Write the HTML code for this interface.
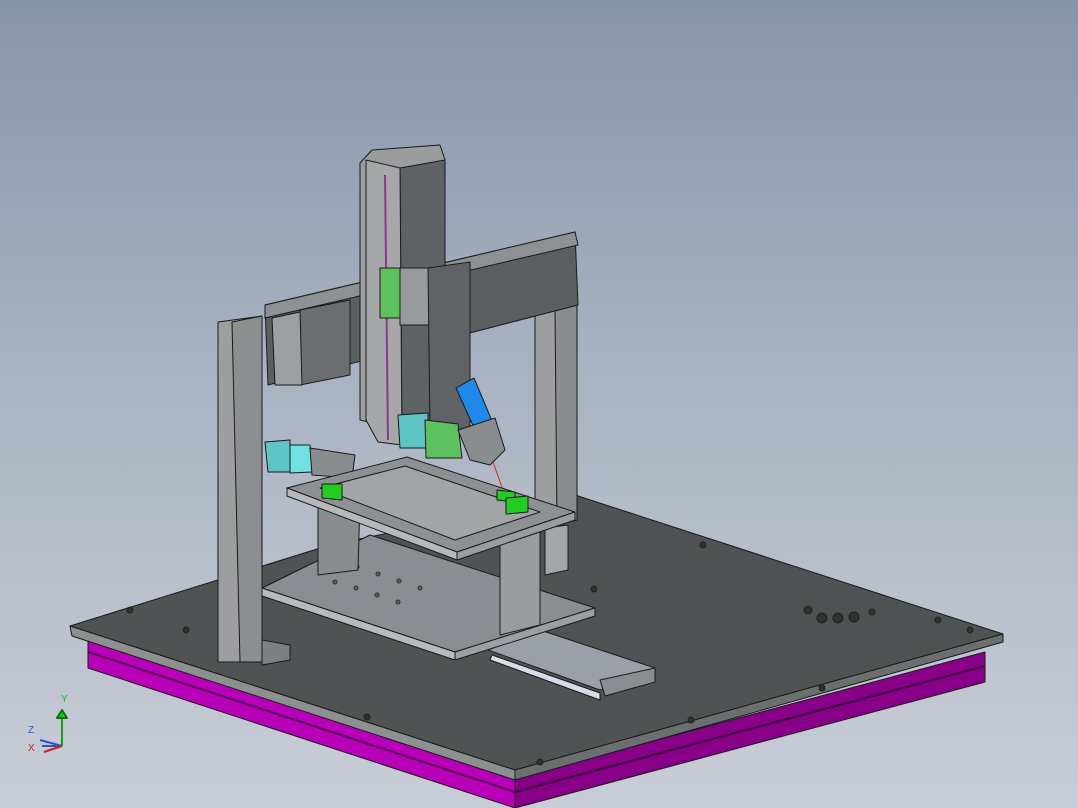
<!DOCTYPE html>
<html><head><meta charset="utf-8"><style>
html,body{margin:0;padding:0;width:1078px;height:808px;overflow:hidden}
body{background:linear-gradient(180deg,#8795aa 0%,#a9b2c2 45%,#c9cdd6 100%);font-family:"Liberation Sans",sans-serif}
svg{position:absolute;left:0;top:0}
</style></head><body>
<svg width="1078" height="808" viewBox="0 0 1078 808" stroke="#1a1a1a" stroke-width="1" stroke-linejoin="round">
<!-- magenta frame -->
<polygon points="88,640 515,778 515,808 88,668" fill="#b800b8"/>
<polygon points="515,778 985,652 985,682 515,808" fill="#880088"/>
<line x1="88" y1="652" x2="515" y2="792" stroke="#5a005a" stroke-width="2"/>
<line x1="515" y1="792" x2="985" y2="666" stroke="#400040" stroke-width="2"/>
<!-- plate -->
<polygon points="70,626 330,545 575,495 1003,634 515,770" fill="#4f5354"/>
<polygon points="70,626 515,770 515,780 72,636" fill="#8d9091"/>
<polygon points="515,770 1003,634 1003,642 515,780" fill="#6c6f70"/>
<!-- plate holes -->
<g fill="#2e3132" stroke="#222">
<circle cx="822" cy="618" r="5"/><circle cx="838" cy="618" r="5"/><circle cx="854" cy="617" r="5"/><circle cx="808" cy="610" r="4"/>
<circle cx="130" cy="610" r="3"/><circle cx="186" cy="630" r="3"/><circle cx="367" cy="717" r="3"/><circle cx="540" cy="762" r="3"/><circle cx="691" cy="720" r="3"/><circle cx="822" cy="688" r="3"/><circle cx="970" cy="630" r="3"/><circle cx="703" cy="545" r="3"/><circle cx="872" cy="612" r="3"/><circle cx="938" cy="620" r="3"/><circle cx="594" cy="589" r="3"/>
</g>
<!-- rail -->
<polygon points="488,650 600,690 655,678 655,668 540,630" fill="#9aa0a6"/>
<polygon points="492,655 600,693 600,700 490,660" fill="#d8dce8"/>
<polygon points="600,680 655,668 655,682 605,696" fill="#8a8e92"/>
<!-- left column -->
<polygon points="218,322 262,316 262,662 218,662" fill="#9c9ea0"/>
<polygon points="232,322 262,316 262,662 240,662" fill="#8c8e90"/>
<polygon points="262,640 290,645 290,660 262,665" fill="#7d8082"/>
<!-- right column -->
<polygon points="535,315 577,305 577,520 535,528" fill="#9c9ea0"/>
<polygon points="555,310 577,305 577,520 557,524" fill="#8a8c8e"/>
<!-- crossbeam -->
<polygon points="265,305 575,232 578,305 268,385" fill="#5c5f62"/>
<polygon points="265,305 575,232 578,245 265,318" fill="#8e9194"/>
<polygon points="300,310 350,300 350,375 300,385" fill="#6b6e71"/>
<polygon points="272,318 300,312 302,385 275,385" fill="#9da0a2"/>
<!-- z axis -->
<polygon points="360,163 372,150 440,145 445,160 445,440 360,420" fill="#9a9c9e"/>
<polygon points="400,168 445,160 445,440 402,445" fill="#5f6265"/>
<polygon points="366,160 400,168 402,445 378,442 366,420" fill="#a5a7a9"/>
<line x1="385" y1="175" x2="388" y2="440" stroke="#8a3a8a" stroke-width="2"/>
<polygon points="380,268 400,268 400,318 380,318" fill="#5fc060"/>
<polygon points="400,268 430,268 430,325 400,325" fill="#999b9d"/>
<polygon points="428,268 470,262 470,430 430,430" fill="#606366"/>
<!-- motors -->
<polygon points="398,415 428,413 428,448 400,448" fill="#5fc4c4"/>
<polygon points="425,420 458,424 462,458 426,458" fill="#5fc060"/>
<polygon points="265,442 290,440 290,472 268,472" fill="#5fc4c4"/>
<polygon points="290,445 310,445 312,472 290,473" fill="#70e0e0"/>
<polygon points="310,448 355,455 352,478 312,475" fill="#8a8d90"/>
<!-- syringe -->
<polygon points="456,388 474,378 500,440 484,450" fill="#1f88e8"/>
<polygon points="458,430 495,418 505,450 490,465 470,460" fill="#8a8d90"/>
<line x1="493" y1="462" x2="510" y2="510" stroke="#e02020"/>
<!-- lower carriage plate -->
<polygon points="262,588 370,535 595,608 455,652" fill="#8a8e92"/>
<polygon points="262,588 455,652 455,660 262,596" fill="#b8bbbd"/>
<polygon points="455,652 595,608 595,616 455,660" fill="#9da0a2"/>
<g fill="#5a5e60" stroke="#333"><circle cx="335" cy="582" r="2"/><circle cx="356" cy="588" r="2"/><circle cx="377" cy="595" r="2"/><circle cx="398" cy="602" r="2"/><circle cx="357" cy="567" r="2"/><circle cx="378" cy="574" r="2"/><circle cx="399" cy="581" r="2"/><circle cx="420" cy="588" r="2"/></g>
<!-- table supports -->
<polygon points="318,505 360,500 358,570 318,575" fill="#8a8d90"/>
<polygon points="500,530 530,522 540,530 540,625 500,635" fill="#999c9e"/>
<polygon points="545,528 568,525 568,570 545,575" fill="#a3a6a8"/>
<!-- tray -->
<polygon points="287,488 407,457 575,512 457,552" fill="#8e9194"/>
<polygon points="320,488 405,466 540,512 455,540" fill="#a2a4a6"/>
<polygon points="287,488 457,552 457,560 287,496" fill="#b6b9bb"/>
<polygon points="457,552 575,512 575,520 457,560" fill="#9a9d9f"/>
<polygon points="322,484 342,484 342,500 322,498" fill="#22cc22"/>
<polygon points="497,490 515,492 515,502 497,500" fill="#22cc22"/>
<polygon points="506,498 528,496 528,512 506,514" fill="#22cc22"/>
<!-- triad -->
<g stroke-width="2">
<line x1="42" y1="746" x2="62" y2="746" stroke="#d02020"/>
<line x1="42" y1="746" x2="62" y2="746" stroke="#3050d0"/>
<line x1="62" y1="746" x2="62" y2="716" stroke="#10a010"/>
<polygon points="57,718 62,710 67,718" fill="#10d010" stroke="#107010"/>
<line x1="62" y1="746" x2="40" y2="740" stroke="#3050d0"/>
<line x1="62" y1="746" x2="44" y2="752" stroke="#d02020"/>
</g>
<text x="61" y="702" font-size="10" fill="#10c010" stroke="none">Y</text>
<text x="28" y="733" font-size="10" fill="#3050d0" stroke="none">Z</text>
<text x="28" y="751" font-size="10" fill="#d02020" stroke="none">X</text>
</svg>
</body></html>
